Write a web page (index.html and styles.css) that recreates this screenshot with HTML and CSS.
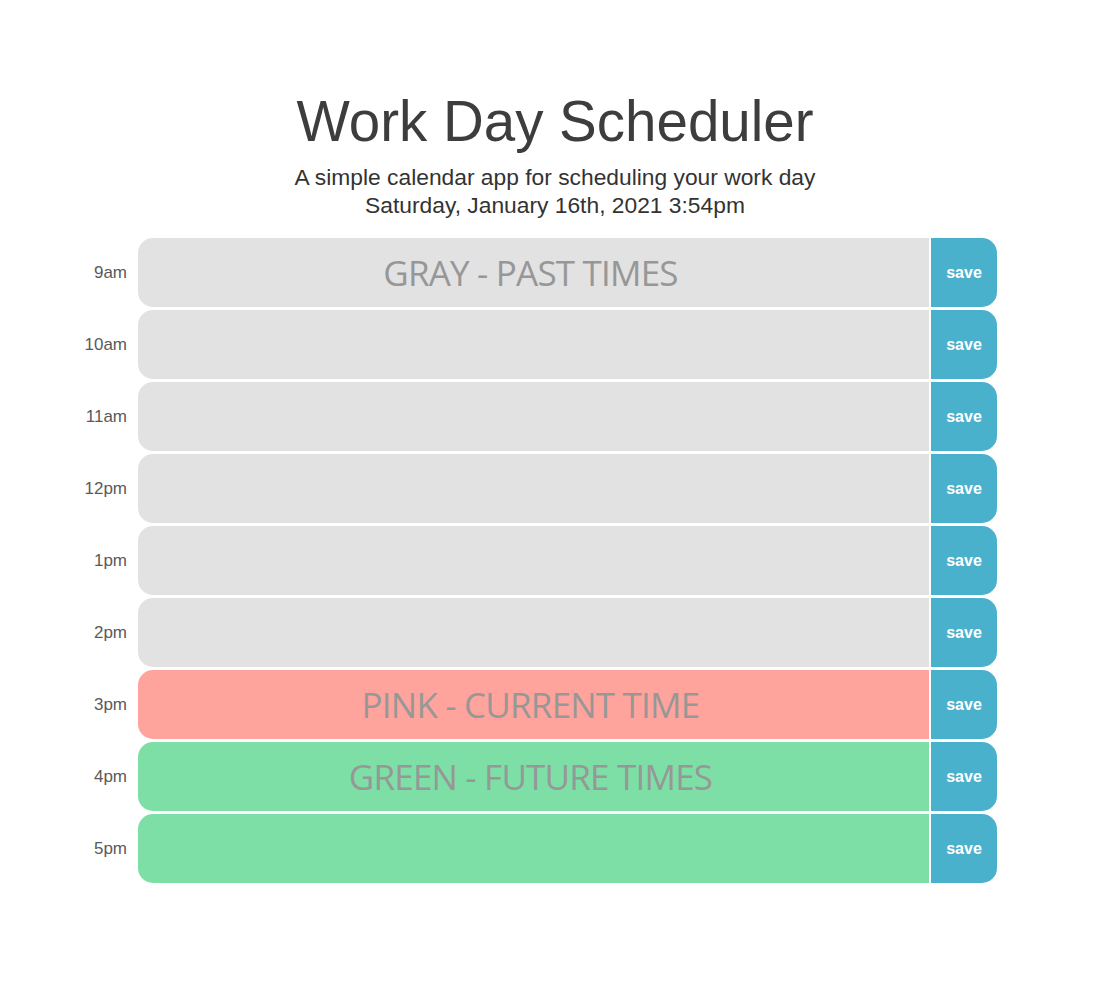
FILE: index.html
```html
<!DOCTYPE html>
<html lang="en">
<head>
<meta charset="utf-8">
<title>Work Day Scheduler</title>
<link rel="stylesheet" href="styles.css">
</head>
<body>
<header class="header">
  <h1 class="title">Work Day Scheduler</h1>
  <p class="lead">A simple calendar app for scheduling your work day</p>
  <p class="lead">Saturday, January 16th, 2021 3:54pm</p>
</header>
<main class="schedule">
  <div class="row"><div class="hour">9am</div><div class="task past"><span class="note">GRAY - PAST TIMES</span></div><button class="save">save</button></div>
  <div class="row"><div class="hour">10am</div><div class="task past"></div><button class="save">save</button></div>
  <div class="row"><div class="hour">11am</div><div class="task past"></div><button class="save">save</button></div>
  <div class="row"><div class="hour">12pm</div><div class="task past"></div><button class="save">save</button></div>
  <div class="row"><div class="hour">1pm</div><div class="task past"></div><button class="save">save</button></div>
  <div class="row"><div class="hour">2pm</div><div class="task past"></div><button class="save">save</button></div>
  <div class="row"><div class="hour">3pm</div><div class="task present"><span class="note">PINK - CURRENT TIME</span></div><button class="save">save</button></div>
  <div class="row"><div class="hour">4pm</div><div class="task future"><span class="note">GREEN - FUTURE TIMES</span></div><button class="save">save</button></div>
  <div class="row"><div class="hour">5pm</div><div class="task future"></div><button class="save">save</button></div>
</main>
</body>
</html>
```
FILE: styles.css
```css
html, body {
  margin: 0;
  padding: 0;
  background: #ffffff;
}
body {
  font-family: "Liberation Sans", Arial, sans-serif;
}
.header {
  padding-top: 92px;
  padding-left: 10px;
  text-align: center;
}
.title {
  margin: 0 0 11px;
  font-size: 56.5px;
  line-height: 60px;
  font-weight: 400;
  color: #3d3d3d;
}
.lead {
  margin: 0;
  font-size: 22.8px;
  line-height: 28px;
  color: #333333;
}
.schedule {
  margin-top: 19px;
  margin-left: 78px;
  display: flex;
  flex-direction: column;
  gap: 3px;
}
.row {
  display: flex;
  height: 69px;
}
.hour {
  width: 60px;
  box-sizing: border-box;
  padding-right: 11px;
  display: flex;
  align-items: center;
  justify-content: flex-end;
  font-size: 17px;
  color: #5a5a5a;
}
.task {
  width: 791px;
  border-radius: 15px 0 0 15px;
  display: flex;
  align-items: center;
  justify-content: center;
  padding-right: 6px;
  box-sizing: border-box;
}
.past { background: #e2e2e2; }
.present { background: #ffa49c; }
.future { background: #7ddfa6; }
.note {
  font-family: "Open Sans", sans-serif;
  font-size: 35px;
  letter-spacing: -0.8px;
  color: #979797;
  line-height: 1;
}
.save {
  width: 66px;
  margin-left: 2px;
  border: none;
  border-radius: 0 15px 15px 0;
  background: #4ab1cd;
  color: #ffffff;
  font-family: "Liberation Sans", Arial, sans-serif;
  font-weight: 700;
  font-size: 16px;
  padding: 0;
}
```
